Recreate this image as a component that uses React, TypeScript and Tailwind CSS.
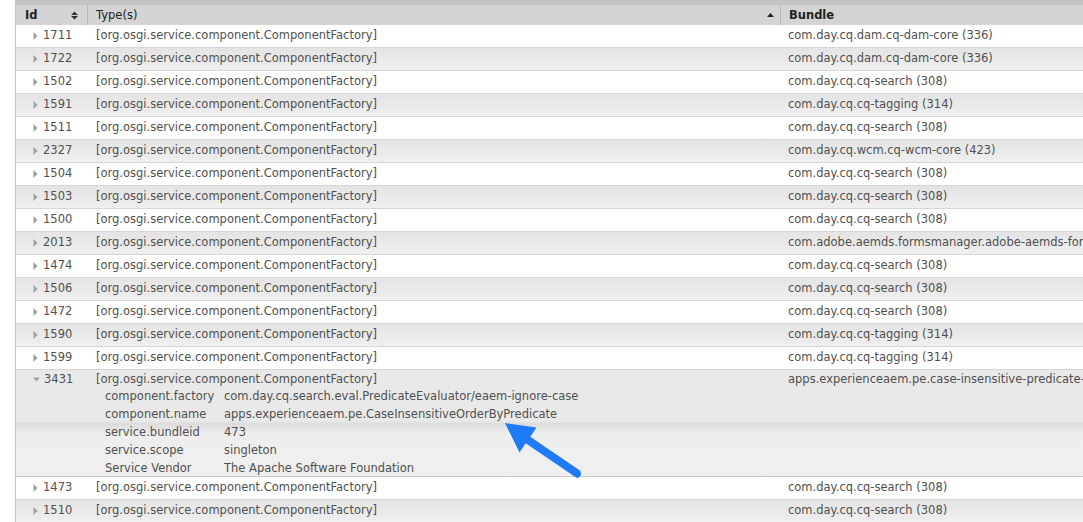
import React from 'react';

type Row = { id: string; bundle: string };

const TYPE = '[org.osgi.service.component.ComponentFactory]';
const SEARCH = 'com.day.cq.cq-search (308)';
const TAGGING = 'com.day.cq.cq-tagging (314)';
const DAM = 'com.day.cq.dam.cq-dam-core (336)';

const before: Row[] = [
  { id: '1711', bundle: DAM },
  { id: '1722', bundle: DAM },
  { id: '1502', bundle: SEARCH },
  { id: '1591', bundle: TAGGING },
  { id: '1511', bundle: SEARCH },
  { id: '2327', bundle: 'com.day.cq.wcm.cq-wcm-core (423)' },
  { id: '1504', bundle: SEARCH },
  { id: '1503', bundle: SEARCH },
  { id: '1500', bundle: SEARCH },
  { id: '2013', bundle: 'com.adobe.aemds.formsmanager.adobe-aemds-formsmanager-core (512)' },
  { id: '1474', bundle: SEARCH },
  { id: '1506', bundle: SEARCH },
  { id: '1472', bundle: SEARCH },
  { id: '1590', bundle: TAGGING },
  { id: '1599', bundle: TAGGING },
];

const after: Row[] = [
  { id: '1473', bundle: SEARCH },
  { id: '1510', bundle: SEARCH },
];

const props: [string, string][] = [
  ['component.factory', 'com.day.cq.search.eval.PredicateEvaluator/eaem-ignore-case'],
  ['component.name', 'apps.experienceaem.pe.CaseInsensitiveOrderByPredicate'],
  ['service.bundleid', '473'],
  ['service.scope', 'singleton'],
  ['Service Vendor', 'The Apache Software Foundation'],
];

function Caret({ open }: { open?: boolean }) {
  return open ? (
    <svg width="7" height="5" viewBox="0 0 7 5" className="mr-[4px]">
      <path d="M0 0.5 L7 0.5 L3.5 4.5 Z" fill="#a0a0a0" />
    </svg>
  ) : (
    <svg width="5" height="8" viewBox="0 0 5 8" className="mr-[5px]">
      <path d="M0.5 0 L4.5 4 L0.5 8 Z" fill="#a0a0a0" />
    </svg>
  );
}

function TableRow({ row, odd }: { row: Row; odd: boolean }) {
  return (
    <div
      className={`grid grid-cols-[71px_693px_320px] h-[23px] leading-[21px] border-b border-[#d6d6d6] ${
        odd ? 'bg-gradient-to-b from-[#e4e4e4] to-[#efefef]' : 'bg-white'
      }`}
    >
      <div className="flex items-center pl-[17px] pb-[1px]">
        <Caret />
        <span>{row.id}</span>
      </div>
      <div className="pl-[9px]">{TYPE}</div>
      <div className="pl-[8px] whitespace-nowrap">{row.bundle}</div>
    </div>
  );
}

export default function App() {
  return (
    <div className="relative w-[1083px] h-[522px] overflow-hidden bg-white text-[11.5px] text-[#505050] font-['DejaVu_Sans',sans-serif]">
      <div className="ml-[15px] border-l border-[#c6c6c6] w-[1100px] h-full">
        <div className="h-[5px] bg-[#c4c4c4]" />
        <div className="grid grid-cols-[71px_693px_320px] h-[20px] leading-[20px] bg-[#d4d4d4] text-[#222] font-bold">
          <div className="flex items-center justify-between pl-[9px] pr-[9px]">
            <span>Id</span>
            <svg width="7" height="9" viewBox="0 0 7 9">
              <path d="M0 4 L3.5 0.5 L7 4 Z M0 5 L3.5 8.5 L7 5 Z" fill="#333" />
            </svg>
          </div>
          <div className="flex items-center justify-between border-l border-[#b8b8b8] pl-[8px] pr-[6px] font-normal">
            <span>Type(s)</span>
            <svg width="7" height="4" viewBox="0 0 7 4">
              <path d="M0 4 L3.5 0 L7 4 Z" fill="#222" />
            </svg>
          </div>
          <div className="border-l border-[#b8b8b8] pl-[8px]">Bundle</div>
        </div>

        {before.map((r, i) => (
          <TableRow key={r.id} row={r} odd={i % 2 === 1} />
        ))}

        <div className="grid grid-cols-[71px_693px_320px] h-[107px] border-b border-[#c8c8c8] bg-[linear-gradient(to_bottom,#e9e9e9_0,#e9e9e9_51px,#dcdcdc_54px,#eeeeee_64px,#efefef_100%)]">
          <div className="flex items-start pl-[17px] pt-[2px] leading-[15px]">
            <span className="h-[15px] flex items-center">
              <Caret open />
            </span>
            <span>3431</span>
          </div>
          <div className="pl-[9px] pt-[2px] leading-[15px]">
            <div>{TYPE}</div>
            <div className="pl-[9px] leading-[18px]">
              {props.map(([k, v]) => (
                <div key={k} className="flex">
                  <span className="w-[119px] shrink-0">{k}</span>
                  <span>{v}</span>
                </div>
              ))}
            </div>
          </div>
          <div className="pl-[8px] pt-[2px] leading-[15px] whitespace-nowrap">
            apps.experienceaem.pe.case-insensitive-predicate-evaluator (473)
          </div>
        </div>

        {after.map((r, i) => (
          <TableRow key={r.id} row={r} odd={i % 2 === 1} />
        ))}
      </div>

      <svg
        className="absolute left-[498px] top-[415px]"
        width="90"
        height="66"
        viewBox="0 0 90 66"
      >
        <path
          d="M7 8 L21.5 37.4 L27.7 28.3 L77.7 62.3 Q80 64 82 61.5 Q83.6 59 82.3 55.7 L32.3 21.7 L38.5 12.6 Z"
          fill="#1f7bf5"
        />
      </svg>
    </div>
  );
}
